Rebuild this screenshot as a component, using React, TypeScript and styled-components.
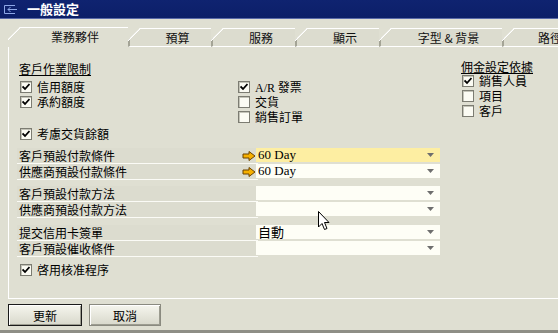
import React from "react";
import styled, { createGlobalStyle } from "styled-components";

const GlobalStyle = createGlobalStyle`
  html, body {
    margin: 0;
    padding: 0;
  }
  body {
    font-family: "Noto Sans CJK TC", sans-serif;
    font-size: 12px;
    color: #000;
  }
`;

const BG = "#dfdfd2";

const tabs = [
  { name: "業務夥伴", width: 120 },
  { name: "預算", width: 83 },
  { name: "服務", width: 84 },
  { name: "顯示", width: 84 },
  { name: "字型 & 背景", width: 123 },
  { name: "路徑", width: 80 },
];

function CheckBox(props: { checked?: boolean }) {
  return (
    <$Box>
      {props.checked && (
        <svg width="8" height="8" viewBox="0 0 8 8">
          <path d="M0.5 3.5 L3 6 L7.5 1" fill="none" stroke="#000" strokeWidth="1.8" />
        </svg>
      )}
    </$Box>
  );
}

function CheckRow(props: { label: React.ReactNode; checked?: boolean }) {
  return (
    <$CheckRow>
      <CheckBox checked={props.checked} />
      <$CheckText>{props.label}</$CheckText>
    </$CheckRow>
  );
}

function Arrow() {
  return (
    <svg width="14" height="10" viewBox="0 0 14 10">
      <polygon
        points="1,3 7,3 7,0.5 13,5 7,9.5 7,7 1,7"
        fill="#f6b000"
        stroke="#6b4300"
        strokeWidth="1"
        strokeLinejoin="round"
      />
    </svg>
  );
}

interface FieldProps {
  label: string;
  value?: string;
  linked?: boolean;
  highlight?: boolean;
  cjk?: boolean;
}

function Field(props: FieldProps) {
  return (
    <$FieldRow>
      <$LabelCell>
        <$CheckText>{props.label}</$CheckText>
        {props.linked && <Arrow />}
      </$LabelCell>
      <$Combo $highlight={props.highlight} $cjk={props.cjk}>
        <span>{props.value}</span>
        <svg width="7" height="4" viewBox="0 0 7 4">
          <polygon points="0,0 7,0 3.5,4" fill="#6e6e6e" />
        </svg>
      </$Combo>
    </$FieldRow>
  );
}

export default function App() {
  return (
    <$Window>
      <GlobalStyle />
      <$TitleBar>
        <svg width="15" height="11" viewBox="0 0 15 11">
          <path d="M12 1.5 H1.5 V9.5 H12" fill="none" stroke="#8ea8e8" strokeWidth="1" />
          <path d="M14 5.5 H5 M7.5 3 L5 5.5 L7.5 8" fill="none" stroke="#8ea8e8" strokeWidth="1" />
        </svg>
        <span>一般設定</span>
      </$TitleBar>

      <$TabStrip>
        {tabs.map((t, i) => (
          <$Tab key={t.name} $active={i === 0} $width={t.width}>
            {t.name}
          </$Tab>
        ))}
      </$TabStrip>

      <$Panel>
        <$TopSection>
          <$Column $width={218}>
            <$Heading>客戶作業限制</$Heading>
            <$Rows $offset={3}>
              <CheckRow label="信用額度" checked />
              <CheckRow label="承約額度" checked />
            </$Rows>
          </$Column>
          <$Column $width={224}>
            <$Rows $offset={18}>
              <CheckRow
                label={
                  <>
                    <$Latin>A/R</$Latin> 發票
                  </>
                }
                checked
              />
              <CheckRow label="交貨" />
              <CheckRow label="銷售訂單" />
            </$Rows>
          </$Column>
          <$Column $width={96} $shift={-1}>
            <$Heading $compact>佣金設定依據</$Heading>
            <$Rows $offset={0}>
              <CheckRow label="銷售人員" checked />
              <CheckRow label="項目" />
              <CheckRow label="客戶" />
            </$Rows>
          </$Column>
        </$TopSection>

        <CheckRow label="考慮交貨餘額" checked />

        <$FieldGroup $gap={7}>
          <Field label="客戶預設付款條件" value="60 Day" linked highlight />
          <Field label="供應商預設付款條件" value="60 Day" linked />
        </$FieldGroup>
        <$FieldGroup $gap={6}>
          <Field label="客戶預設付款方法" />
          <Field label="供應商預設付款方法" />
        </$FieldGroup>
        <$FieldGroup $gap={7}>
          <Field label="提交信用卡簽單" value="自動" cjk />
          <Field label="客戶預設催收條件" />
        </$FieldGroup>

        <$Spacer />
        <CheckRow label="啓用核准程序" checked />
      </$Panel>

      <$ButtonBar>
        <$Button $default>更新</$Button>
        <$Button>取消</$Button>
      </$ButtonBar>

      <$Cursor>
        <svg width="12" height="20" viewBox="0 0 12 20">
          <path
            d="M0.5 0.5 L0.5 16 L4 12.5 L6.5 18.5 L9 17.5 L6.5 11.5 L11 11.5 Z"
            fill="#fff"
            stroke="#000"
            strokeWidth="1"
            strokeLinejoin="miter"
          />
        </svg>
      </$Cursor>
    </$Window>
  );
}

const $Window = styled.div`
  position: relative;
  width: 558px;
  height: 333px;
  overflow: hidden;
  background: ${BG};
  display: flex;
  flex-direction: column;
`;

const $TitleBar = styled.div`
  height: 18px;
  flex-shrink: 0;
  border-bottom: 1px solid #5a6aa8;
  background: linear-gradient(#0f2370, #0c1f68);
  display: flex;
  align-items: center;
  gap: 9px;
  padding-left: 3px;
  color: #fff;
  font-weight: bold;
  font-size: 13px;
  line-height: 18px;
`;

const $TabStrip = styled.div`
  margin-top: 8px;
  height: 20px;
  flex-shrink: 0;
  padding-left: 8px;
  display: flex;
  align-items: flex-end;
`;

const $Tab = styled.div<{ $active?: boolean; $width: number }>`
  position: relative;
  flex-shrink: 0;
  box-sizing: border-box;
  width: ${(p) => p.$width}px;
  height: ${(p) => (p.$active ? "20px" : "19px")};
  padding-left: 14px;
  background: ${(p) => (p.$active ? BG : "#dcdccf")};
  border-top: 1px solid #fff;
  border-bottom: ${(p) => (p.$active ? "none" : "1px solid #fff")};
  border-left: ${(p) => (p.$active ? "none" : "2px solid #a4a496")};
  clip-path: polygon(0 12px, 12px 0, 100% 0, 100% 100%, 0 100%);
  text-align: center;
  white-space: nowrap;
  font-size: 12px;
  line-height: 17px;
  color: #111;

  &::before {
    content: "";
    position: absolute;
    left: ${(p) => (p.$active ? "0" : "-2px")};
    top: -1px;
    width: 13px;
    height: 13px;
    background: linear-gradient(
      135deg,
      transparent calc(50% - 1px),
      #fff calc(50% - 1px),
      #fff calc(50% + 0.5px),
      transparent calc(50% + 0.5px)
    );
  }
`;

const $Panel = styled.div`
  position: relative;
  margin-left: 8px;
  height: 252px;
  flex-shrink: 0;
  border-left: 1px solid #fff;
  border-bottom: 1px solid #fff;
  padding: 14px 0 0 10px;
  box-sizing: border-box;
  display: flex;
  flex-direction: column;
`;

const $TopSection = styled.div`
  height: 65px;
  flex-shrink: 0;
  display: flex;
  align-items: flex-start;
`;

const $Column = styled.div<{ $width: number; $shift?: number }>`
  width: ${(p) => p.$width}px;
  margin-top: ${(p) => p.$shift || 0}px;
  flex-shrink: 0;
  display: flex;
  flex-direction: column;
`;

const $Heading = styled.div<{ $compact?: boolean }>`
  height: ${(p) => (p.$compact ? 13 : 15)}px;
  line-height: ${(p) => (p.$compact ? 13 : 15)}px;
  text-decoration: underline;
  text-underline-offset: 1px;
  white-space: nowrap;
`;

const $Rows = styled.div<{ $offset: number }>`
  margin-top: ${(p) => p.$offset}px;
  display: flex;
  flex-direction: column;
`;

const $CheckRow = styled.div`
  height: 15px;
  flex-shrink: 0;
  display: flex;
  align-items: center;
  gap: 5px;
  white-space: nowrap;
`;

const $CheckText = styled.span`
  display: block;
  height: 15px;
  line-height: 15px;
  overflow: visible;
`;

const $Box = styled.div`
  width: 10px;
  height: 10px;
  margin-left: 1px;
  border: 1px solid #7c7c72;
  box-shadow: inset 1px 1px 0 #c4c4b8;
  background: #fbfbf3;
  display: flex;
  align-items: center;
  justify-content: center;
`;

const $Latin = styled.span`
  font-family: "Liberation Serif", serif;
`;

const $FieldGroup = styled.div<{ $gap: number }>`
  margin-top: ${(p) => p.$gap}px;
  flex-shrink: 0;
  display: flex;
  flex-direction: column;
`;

const $FieldRow = styled.div`
  height: 16px;
  margin-left: -2px;
  display: flex;
  align-items: flex-start;
`;

const $LabelCell = styled.div`
  width: 237px;
  height: 15px;
  padding: 0 2px;
  box-sizing: content-box;
  background: #dcdccf;
  border-bottom: 1px solid #fbfbf6;
  display: flex;
  align-items: center;
  justify-content: space-between;
  white-space: nowrap;
`;

const $Combo = styled.div<{ $highlight?: boolean; $cjk?: boolean }>`
  width: 184px;
  height: 14px;
  margin-left: -2px;
  background: ${(p) => (p.$highlight ? "#fdeea2" : "#fefef6")};
  display: flex;
  align-items: center;
  justify-content: space-between;
  padding: 0 6px 0 2px;
  box-sizing: border-box;
  font-family: ${(p) =>
    p.$cjk ? '"Noto Sans CJK TC", sans-serif' : '"Liberation Serif", serif'};
  font-size: 13px;
  line-height: 14px;
`;

const $Spacer = styled.div`
  height: 5px;
  flex-shrink: 0;
`;

const $ButtonBar = styled.div`
  flex: 1;
  display: flex;
  gap: 7px;
  padding: 5px 0 0 8px;
  border-bottom: 3px solid #8e8e86;
`;

const $Button = styled.div<{ $default?: boolean }>`
  width: ${(p) => (p.$default ? 74 : 72)}px;
  height: 22px;
  box-sizing: border-box;
  border: 1px solid ${(p) => (p.$default ? "#1a1a1a" : "#8a8a80")};
  box-shadow: inset 1px 1px 0 #fff, inset -1px -1px 0 #9c9c90;
  background: linear-gradient(#f6f6ee, #d8d8cb);
  display: flex;
  align-items: center;
  justify-content: center;
  font-size: 12px;
`;

const $Cursor = styled.div`
  position: absolute;
  left: 318px;
  top: 211px;
  width: 12px;
  height: 20px;
`;
